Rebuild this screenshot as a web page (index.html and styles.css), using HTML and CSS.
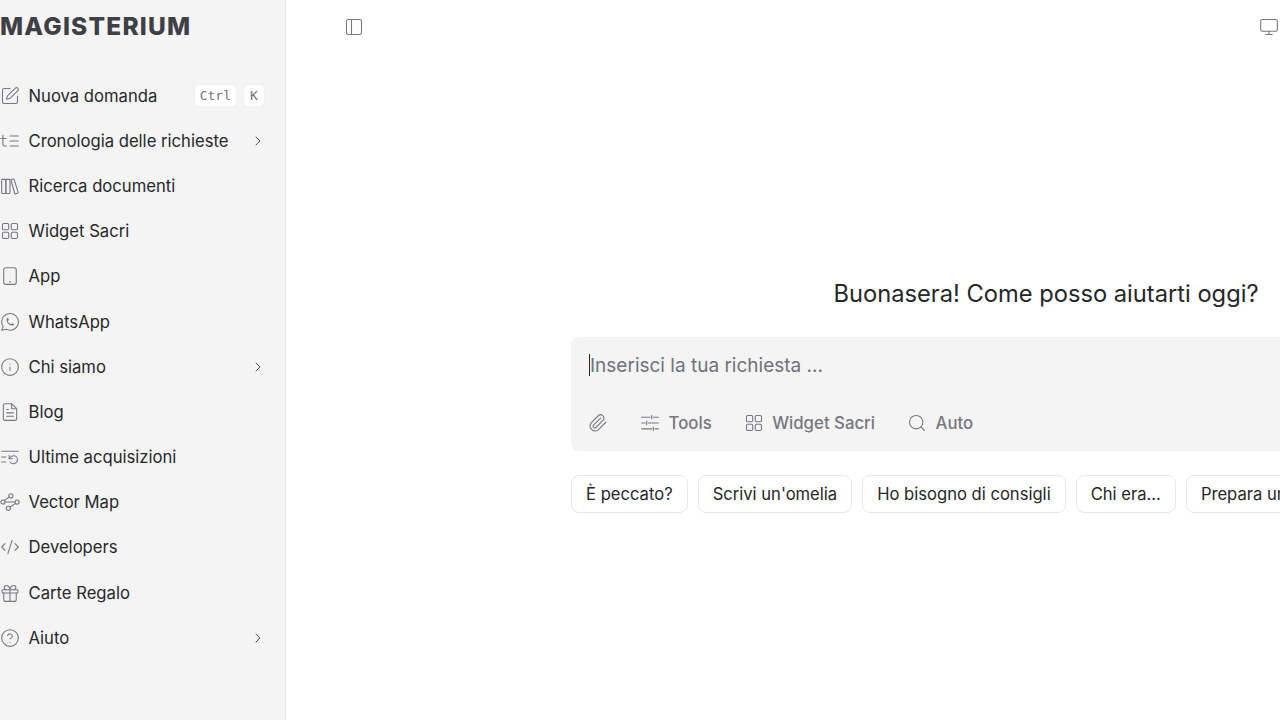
FILE: index.html
```html
<!DOCTYPE html>
<html lang="en">
<head>
    <meta charset="UTF-8">
    <meta name="viewport" content="width=device-width, initial-scale=1.0">
    <title>Magisterium</title>
    <link rel="stylesheet" href="styles.css">
</head>
<body>
    <svg class="icon-defs" aria-hidden="true">
        <symbol id="i-pen" viewBox="0 0 24 24"><path d="M12 3H5a2 2 0 0 0-2 2v14a2 2 0 0 0 2 2h14a2 2 0 0 0 2-2v-7"/><path d="M18.4 2.6a1 1 0 0 1 3 3l-9 9a2 2 0 0 1-.9.5l-2.9.8a.5.5 0 0 1-.6-.6l.8-2.9a2 2 0 0 1 .5-.8z"/></symbol>
        <symbol id="i-history" viewBox="0 0 24 24"><path d="M22 12h-10"/><path d="M22 6h-10"/><path d="M22 18h-10"/><path d="M1 9h6"/><path d="M3.500 5v11c0 1.100.9 2 2 2h2"/></symbol>
        <symbol id="i-books" viewBox="0 0 24 24"><rect x="2" y="4" width="5" height="17" rx="1"/><rect x="7" y="4" width="5" height="17" rx="1"/><path d="m13 4.500 2.800-.8a1 1 0 0 1 1.200.7l4.800 15.200a1 1 0 0 1-.7 1.200l-2.300.6a1 1 0 0 1-1.200-.7z"/></symbol>
        <symbol id="i-grid" viewBox="0 0 24 24"><rect x="3" y="3" width="7.500" height="7.500" rx="1.500"/><rect x="13.500" y="3" width="7.500" height="7.500" rx="1.500"/><rect x="3" y="13.500" width="7.500" height="7.500" rx="1.500"/><rect x="13.500" y="13.500" width="7.500" height="7.500" rx="1.500"/></symbol>
        <symbol id="i-device" viewBox="0 0 24 24"><rect x="4.500" y="2" width="15" height="20" rx="2.500"/><path d="M11.500 19h1"/></symbol>
        <symbol id="i-whatsapp" viewBox="0 0 24 24"><path d="m2 22 1.800-4.600a10 10 0 1 1 3.700 3.300z"/><path d="M8.500 9.500a.6.6 0 0 0 1.200 0v-1a.6.6 0 0 0-1.200 0v1a6 6 0 0 0 6 6h1a.6.6 0 0 0 0-1.200h-1a.6.6 0 0 0 0 1.200"/></symbol>
        <symbol id="i-info" viewBox="0 0 24 24"><circle cx="12" cy="12" r="10"/><path d="M12 16v-4"/><path d="M12 8.500h.01"/></symbol>
        <symbol id="i-file" viewBox="0 0 24 24"><path d="M14 2H6a2 2 0 0 0-2 2v16a2 2 0 0 0 2 2h12a2 2 0 0 0 2-2V8z"/><path d="M14 2v6h6"/><path d="M8 13h8"/><path d="M8 17h8"/><path d="M8 9h2"/></symbol>
        <symbol id="i-recent" viewBox="0 0 24 24"><path d="M22 5H2"/><path d="M7 12H2"/><path d="M7 18H2"/><path d="M12 18a5 5 0 0 0 9-3 4.500 4.500 0 0 0-4.500-4.500c-1.300 0-2.500.5-3.400 1.400L11 14"/><path d="M11 10v4h4"/></symbol>
        <symbol id="i-map" viewBox="0 0 24 24"><circle cx="13" cy="4.500" r="2.500"/><circle cx="3.500" cy="12" r="2.500"/><circle cx="20.500" cy="12" r="2.500"/><circle cx="10" cy="19.500" r="2.500"/><path d="m11 6.200-5.800 4"/><path d="M6 12h12"/><path d="m12 18 6.800-4.300"/></symbol>
        <symbol id="i-code" viewBox="0 0 24 24"><path d="m18 16 4-4-4-4"/><path d="m6 8-4 4 4 4"/><path d="m14.500 4-5 16"/></symbol>
        <symbol id="i-gift" viewBox="0 0 24 24"><rect x="2.500" y="8" width="19" height="4" rx="1"/><path d="M12 8v14"/><path d="M19.500 12v8a2 2 0 0 1-2 2h-11a2 2 0 0 1-2-2v-8"/><path d="M7.500 8a2.500 2.500 0 0 1 0-5C10 3 12 5.500 12 8c0-2.500 2-5 4.500-5a2.500 2.500 0 0 1 0 5"/></symbol>
        <symbol id="i-help" viewBox="0 0 24 24"><circle cx="12" cy="12" r="10"/><path d="M9.100 9a3 3 0 0 1 5.800 1c0 2-3 3-3 3"/><path d="M12 17h.01"/></symbol>
        <symbol id="i-chevron" viewBox="0 0 24 24"><path d="m9 18 6-6-6-6"/></symbol>
        <symbol id="i-panel" viewBox="0 0 24 24"><rect x="3" y="3" width="18" height="18" rx="2"/><path d="M9 3v18"/></symbol>
        <symbol id="i-monitor" viewBox="0 0 24 24"><rect x="2" y="3" width="20" height="14" rx="2"/><path d="M8 21h8"/><path d="M12 17v4"/></symbol>
        <symbol id="i-clip" viewBox="0 0 24 24"><path d="m21.400 11.100-9.200 9.100a6 6 0 0 1-8.400-8.400l8.500-8.500a4 4 0 0 1 5.700 5.600l-8.600 8.500a2 2 0 0 1-2.800-2.800l8.500-8.500"/></symbol>
        <symbol id="i-sliders" viewBox="0 0 24 24"><path d="M2 5h10"/><path d="M16 5h6"/><path d="M14 3v4"/><path d="M2 12h4"/><path d="M10 12h12"/><path d="M8 10v4"/><path d="M2 19h12"/><path d="M18 19h4"/><path d="M16 17v4"/></symbol>
        <symbol id="i-search" viewBox="0 0 24 24"><circle cx="11" cy="11" r="8"/><path d="m21 21-4.300-4.300"/></symbol>
    </svg>

    <div class="page">
        <aside class="sidebar">
            <div class="logo">MAGISTERIUM</div>
            <nav class="menu">
                <a class="menu-item"><svg class="icon"><use href="#i-pen"/></svg><span class="menu-label">Nuova domanda</span><kbd class="key key-ctrl">Ctrl</kbd><kbd class="key">K</kbd></a>
                <a class="menu-item"><svg class="icon"><use href="#i-history"/></svg><span class="menu-label">Cronologia delle richieste</span><svg class="chevron"><use href="#i-chevron"/></svg></a>
                <a class="menu-item"><svg class="icon"><use href="#i-books"/></svg><span class="menu-label">Ricerca documenti</span></a>
                <a class="menu-item"><svg class="icon"><use href="#i-grid"/></svg><span class="menu-label">Widget Sacri</span></a>
                <a class="menu-item"><svg class="icon"><use href="#i-device"/></svg><span class="menu-label">App</span></a>
                <a class="menu-item"><svg class="icon"><use href="#i-whatsapp"/></svg><span class="menu-label">WhatsApp</span></a>
                <a class="menu-item"><svg class="icon"><use href="#i-info"/></svg><span class="menu-label">Chi siamo</span><svg class="chevron"><use href="#i-chevron"/></svg></a>
                <a class="menu-item"><svg class="icon"><use href="#i-file"/></svg><span class="menu-label">Blog</span></a>
                <a class="menu-item"><svg class="icon"><use href="#i-recent"/></svg><span class="menu-label">Ultime acquisizioni</span></a>
                <a class="menu-item"><svg class="icon"><use href="#i-map"/></svg><span class="menu-label">Vector Map</span></a>
                <a class="menu-item"><svg class="icon"><use href="#i-code"/></svg><span class="menu-label">Developers</span></a>
                <a class="menu-item"><svg class="icon"><use href="#i-gift"/></svg><span class="menu-label">Carte Regalo</span></a>
                <a class="menu-item"><svg class="icon"><use href="#i-help"/></svg><span class="menu-label">Aiuto</span><svg class="chevron"><use href="#i-chevron"/></svg></a>
            </nav>
        </aside>

        <main class="main">
            <header class="topbar">
                <svg class="icon"><use href="#i-panel"/></svg>
                <svg class="icon"><use href="#i-monitor"/></svg>
            </header>
            <section class="hero">
                <h1 class="greeting">Buonasera! Come posso aiutarti oggi?</h1>
                <div class="composer">
                    <div class="prompt"><span class="caret"></span>Inserisci la tua richiesta ...</div>
                    <div class="tools">
                        <svg class="icon"><use href="#i-clip"/></svg>
                        <span class="tool"><svg class="icon"><use href="#i-sliders"/></svg>Tools</span>
                        <span class="tool"><svg class="icon"><use href="#i-grid"/></svg>Widget Sacri</span>
                        <span class="tool"><svg class="icon"><use href="#i-search"/></svg>Auto</span>
                    </div>
                </div>
                <div class="chips">
                    <button class="chip">È peccato?</button>
                    <button class="chip">Scrivi un'omelia</button>
                    <button class="chip">Ho bisogno di consigli</button>
                    <button class="chip">Chi era...</button>
                    <button class="chip">Prepara un discorso</button>
                </div>
            </section>
        </main>
    </div>
</body>
</html>
```

FILE: styles.css
```css
* {
    box-sizing: border-box;
}
html, body {
    margin: 0;
    height: 100%;
    overflow: hidden;
}
body {
    font-family: Inter, "Liberation Sans", sans-serif;
    background-color: #fff;
    color: #27272a;
}
.icon-defs {
    display: none;
}
.icon, .chevron {
    fill: none;
    stroke: #77777f;
    stroke-width: 1.3;
    stroke-linecap: round;
    stroke-linejoin: round;
    flex: none;
}
.icon {
    width: 20px;
    height: 20px;
}
.page {
    display: flex;
    width: 1280px;
    height: 720px;
    overflow: hidden;
}
.sidebar {
    flex: none;
    width: 286px;
    background-color: #f4f4f5;
    border-right: 1px solid #e7e7e9;
}
.logo {
    height: 73px;
    padding-top: 10px;
    font-size: 24.500px;
    line-height: 32px;
    font-weight: 800;
    letter-spacing: 1.200px;
    color: #3f3f46;
    white-space: nowrap;
}
.menu {
    display: grid;
    grid-auto-rows: 45.200px;
}
.menu-item {
    display: flex;
    align-items: center;
    padding-right: 20px;
    font-size: 16.650px;
    color: #27272a;
}
.menu-label {
    flex: 1;
    margin-left: 8.500px;
    white-space: nowrap;
}
.chevron {
    width: 16px;
    height: 16px;
    margin-right: -1px;
    stroke: #52525b;
    stroke-width: 1.500;
}
.key {
    display: flex;
    align-items: center;
    justify-content: center;
    height: 23px;
    min-width: 22px;
    padding: 0 5px;
    font-family: "DejaVu Sans Mono", "Liberation Mono", monospace;
    font-size: 13px;
    color: #71717a;
    background-color: #fff;
    border: 1px solid #f0f0f1;
    border-radius: 5px;
}
.key-ctrl {
    margin-right: 6px;
}
.main {
    flex: none;
    width: 994px;
}
.topbar {
    display: flex;
    justify-content: space-between;
    align-items: center;
    height: 54px;
    padding: 0 1px 0 58px;
}
.hero {
    width: 950px;
    margin: 225px 0 0 285px;
}
.greeting {
    margin: 0 0 28px;
    font-size: 23.700px;
    line-height: 30px;
    font-weight: 400;
    text-align: center;
    color: #27272a;
}
.composer {
    height: 114px;
    padding: 16px 18px;
    background-color: #f4f4f5;
    border-radius: 8px;
}
.prompt {
    display: flex;
    align-items: center;
    height: 24px;
    font-size: 19px;
    color: #71717a;
}
.caret {
    width: 1px;
    height: 22px;
    background-color: #27272a;
}
.tools {
    display: flex;
    align-items: center;
    gap: 32px;
    margin: 36px 0 0 -1px;
    font-size: 16.800px;
    font-weight: 500;
    color: #77777f;
}
.tool {
    display: flex;
    align-items: center;
    gap: 8.500px;
}
.chips {
    display: flex;
    gap: 10px;
    margin-top: 24px;
}
.chip {
    flex: none;
    height: 38px;
    padding: 0 14px;
    font-family: inherit;
    font-size: 16.600px;
    color: #27272a;
    background-color: #fff;
    border: 1px solid #e7e7e9;
    border-radius: 8px;
    white-space: nowrap;
}
```
